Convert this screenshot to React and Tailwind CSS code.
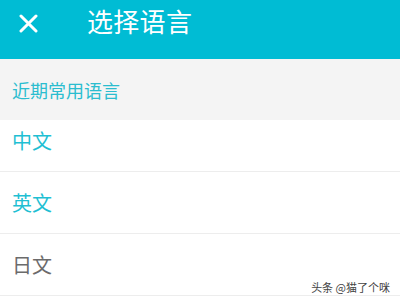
const langs = [
	{ name: "英文", active: true },
	{ name: "日文", active: false },
]

export default function App() {
	return (
		<div
			className="relative w-[400px] h-[300px] overflow-hidden bg-white"
			style={{ fontFamily: '"Noto Sans CJK SC", "Noto Sans", sans-serif' }}
		>
			{/* 상단 바 */}
			<div className="h-[59px] bg-[#00bcd4] flex items-start text-white">
				<div className="w-[56px] h-[46px] flex items-center justify-center">
					<svg width="19" height="19" viewBox="0 0 19 19" fill="none">
						<path d="M2 2 L17 17 M17 2 L2 17" stroke="white" strokeWidth="3" strokeLinecap="round" />
					</svg>
				</div>
				<div className="ml-[31px] mt-[6px] text-[26px] leading-[30px] tracking-[0.3px]">选择语言</div>
			</div>

			<div className="h-[61px] bg-[#f4f4f4] flex items-center px-[12px]">
				<span className="text-[18px] text-[#2bbdcf] leading-none">近期常用语言</span>
			</div>

			<div className="h-[52px] border-b border-[#ededed] flex items-center px-[12px] pb-[10px]">
				<span className="text-[20px] leading-none text-[#1fbfd3]">中文</span>
			</div>
			{langs.map((lang) => (
				<div
					key={lang.name}
					className="h-[62px] border-b border-[#ededed] flex items-center px-[12px]"
				>
					<span
						className={
							lang.active
								? "text-[20px] leading-none text-[#1fbfd3]"
								: "text-[20px] leading-none text-[#6b6b6b]"
						}
					>
						{lang.name}
					</span>
				</div>
			))}

			<div className="absolute right-[10px] bottom-[7px] text-[11px] text-[#444] leading-none">
				头条 @猫了个咪
			</div>
		</div>
	)
}
